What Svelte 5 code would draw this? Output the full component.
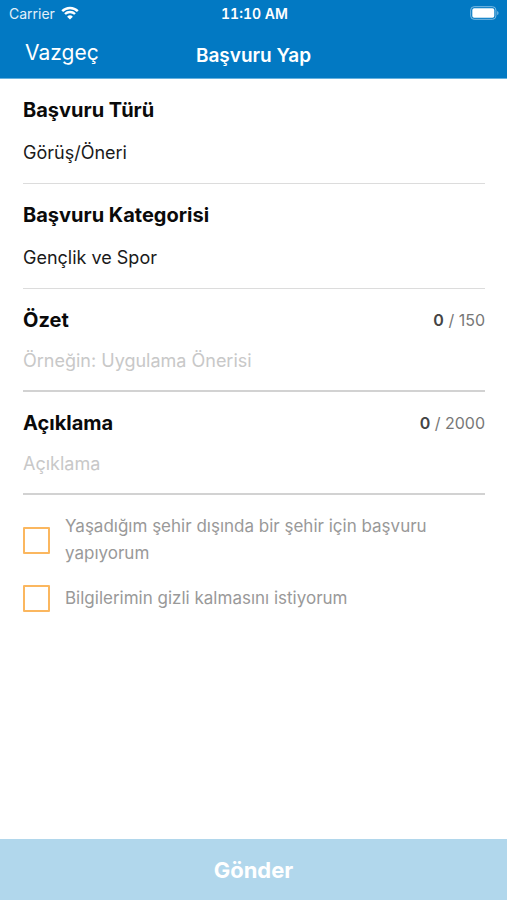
<script lang="ts">
  let type = $state('Görüş/Öneri');
  let category = $state('Gençlik ve Spor');
  let summary = $state('');
  let description = $state('');
  let otherCity = $state(false);
  let keepPrivate = $state(false);

  const summaryLimit = 150;
  const descriptionLimit = 2000;
</script>

<div class="screen">
  <header class="top">
    <div class="status">
      <span class="carrier">
        Carrier
        <svg class="wifi" viewBox="0 0 18 14" aria-hidden="true">
          <path
            d="M1.2 5.2a11 11 0 0 1 15.6 0M4 8a7.1 7.1 0 0 1 10 0"
            fill="none"
            stroke="#fff"
            stroke-width="2.4"
          />
          <path d="M9 13.6 6.1 10.7a4.1 4.1 0 0 1 5.8 0z" fill="#fff" />
        </svg>
      </span>
      <span class="time">11:10 AM</span>
      <svg class="battery" viewBox="0 0 30 14" aria-hidden="true">
        <rect x="0.7" y="0.7" width="25.2" height="12.6" rx="3.4" fill="none" stroke="#7fbce3" />
        <rect x="2.3" y="2.3" width="22" height="9.4" rx="1.8" fill="#fff" />
        <path d="M27.2 4.9v4.2c1.8-.6 1.8-3.6 0-4.2z" fill="#7fbce3" />
      </svg>
    </div>
    <nav class="nav">
      <button class="cancel" type="button">Vazgeç</button>
      <h1>Başvuru Yap</h1>
    </nav>
  </header>

  <form id="application" class="form">
    <div class="field">
      <label for="type">Başvuru Türü</label>
      <select id="type" bind:value={type}>
        <option>Görüş/Öneri</option>
      </select>
    </div>

    <div class="field">
      <label for="category">Başvuru Kategorisi</label>
      <select id="category" bind:value={category}>
        <option>Gençlik ve Spor</option>
      </select>
    </div>

    <div class="field text">
      <div class="row">
        <label for="summary">Özet</label>
        <span class="count"><b>{summary.length}</b> / {summaryLimit}</span>
      </div>
      <input
        id="summary"
        type="text"
        placeholder="Örneğin: Uygulama Önerisi"
        maxlength={summaryLimit}
        bind:value={summary}
      />
    </div>

    <div class="field text">
      <div class="row">
        <label for="description">Açıklama</label>
        <span class="count"><b>{description.length}</b> / {descriptionLimit}</span>
      </div>
      <textarea
        id="description"
        rows="1"
        placeholder="Açıklama"
        maxlength={descriptionLimit}
        bind:value={description}
      ></textarea>
    </div>

    <div class="checks">
      <label class="check">
        <input type="checkbox" bind:checked={otherCity} />
        <span>Yaşadığım şehir dışında bir şehir için başvuru yapıyorum</span>
      </label>
      <label class="check">
        <input type="checkbox" bind:checked={keepPrivate} />
        <span>Bilgilerimin gizli kalmasını istiyorum</span>
      </label>
    </div>
  </form>

  <button class="submit" type="submit" form="application" disabled={!summary || !description}>
    Gönder
  </button>
</div>

<style>
  .screen {
    display: flex;
    flex-direction: column;
    min-height: 100vh;
    background: #fff;
    color: #0a0a0a;
    font-family: Inter, 'Liberation Sans', sans-serif;
  }

  .top {
    background: #0279c3;
    color: #fff;
    border-bottom: 1px solid #66b1de;
  }

  .status {
    display: grid;
    grid-template-columns: 1fr auto 1fr;
    align-items: center;
    height: 26px;
    padding: 0 7px 0 9px;
    font-size: 14px;
  }

  .carrier {
    display: flex;
    align-items: center;
    gap: 6px;
    color: #e2f0f9;
  }

  .wifi {
    width: 18px;
    height: 14px;
  }

  .time {
    font-weight: 600;
    font-variant-numeric: tabular-nums;
  }

  .battery {
    width: 30px;
    height: 14px;
    justify-self: end;
  }

  .nav {
    display: grid;
    grid-template-columns: 1fr auto 1fr;
    align-items: center;
    height: 52px;
    padding: 0 25px;
  }

  .cancel {
    justify-self: start;
    padding: 0;
    border: none;
    background: none;
    color: #fff;
    font-family: inherit;
    font-size: 21px;
  }

  h1 {
    margin: 0;
    padding-top: 6px;
    font-size: 19px;
    font-weight: 600;
  }

  .form {
    flex: 1;
    padding: 0 22px 0 23px;
  }

  .field {
    display: flex;
    flex-direction: column;
    gap: 17px;
    padding: 18px 0 17px;
    border-bottom: 1px solid #dcdcdc;
    line-height: 26px;
  }

  .field.text {
    gap: 15px;
    padding-bottom: 16px;
    border-bottom: 2px solid #d2d2d2;
  }

  .field label {
    font-size: 20px;
    font-weight: 700;
  }

  .row {
    display: flex;
    justify-content: space-between;
  }

  .count {
    color: #777;
    font-size: 16px;
  }

  .count b {
    color: #444;
    font-weight: 600;
  }

  .field select,
  .field input,
  .field textarea {
    appearance: none;
    display: block;
    width: 100%;
    height: 26px;
    margin: 0;
    padding: 0;
    border: none;
    border-radius: 0;
    outline: none;
    background: none;
    color: #1a1a1a;
    font-family: inherit;
    font-size: 18px;
    line-height: 26px;
    resize: none;
    overflow: hidden;
  }

  ::placeholder {
    color: #c8c8c8;
    opacity: 1;
  }

  .checks {
    display: flex;
    flex-direction: column;
    gap: 18px;
    padding: 18px 0;
  }

  .check {
    display: flex;
    align-items: center;
    gap: 15px;
    color: #999;
    font-size: 17px;
    line-height: 27px;
  }

  .check span {
    max-width: 380px;
  }

  .check input {
    appearance: none;
    flex: none;
    width: 27px;
    height: 27px;
    margin: 0;
    border: 2px solid #fbb75f;
    border-radius: 1px;
  }

  .check input:checked {
    background: #fbb75f;
  }

  .submit {
    height: 61px;
    border: none;
    background: #0279c3;
    color: #fff;
    font-family: inherit;
    font-size: 22px;
    font-weight: 700;
  }

  .submit:disabled {
    background: #b1d7ec;
  }
</style>
